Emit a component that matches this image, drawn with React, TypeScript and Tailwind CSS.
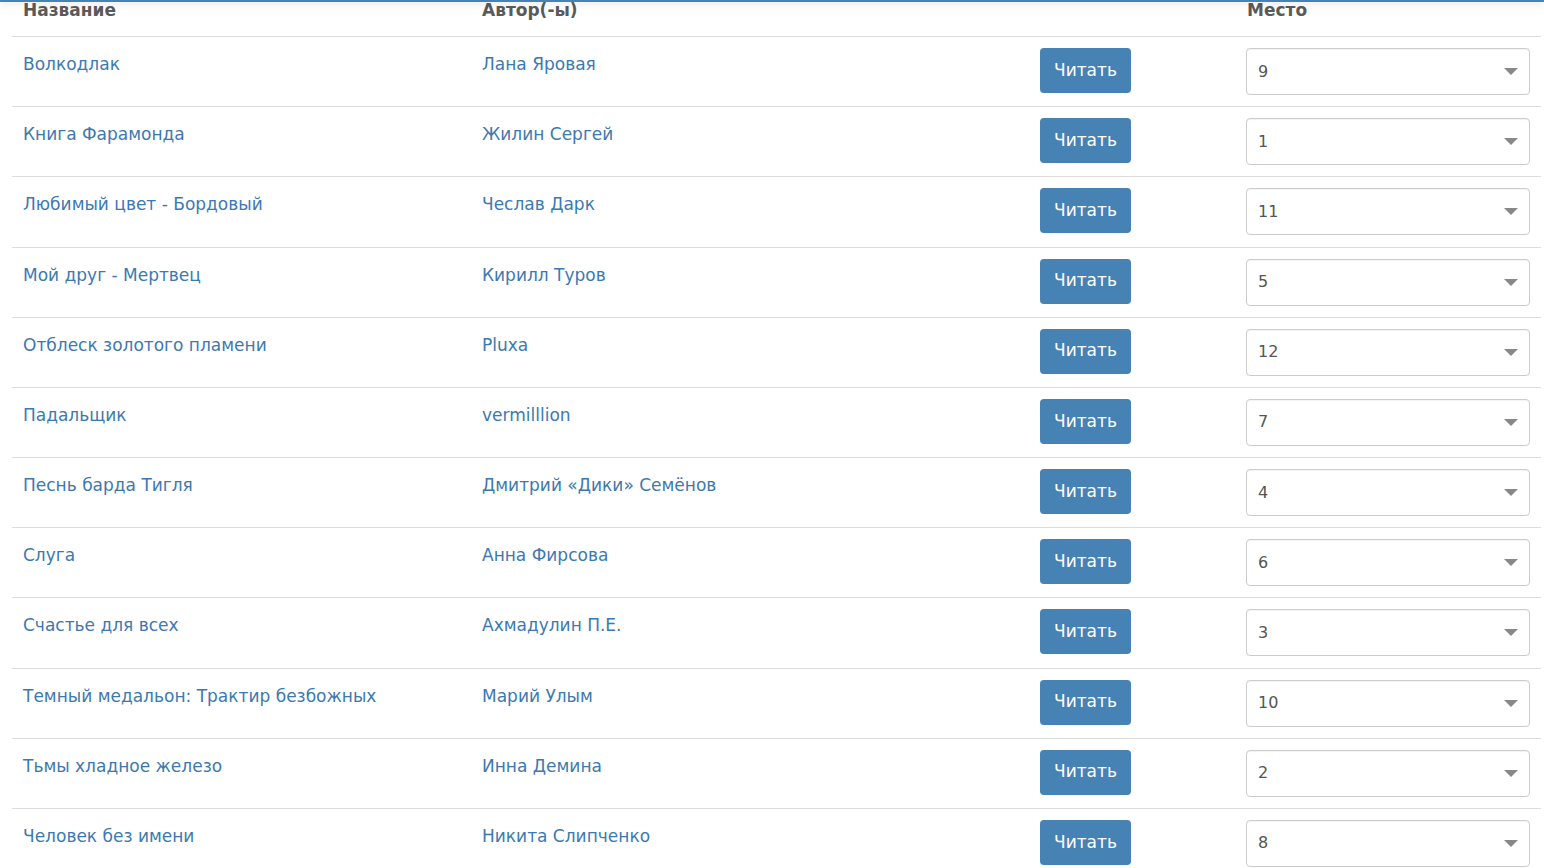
import React from "react";

interface Entry {
  title: string;
  author: string;
  place: number;
}

const entries: Entry[] = [
  { title: "Волкодлак", author: "Лана Яровая", place: 9 },
  { title: "Книга Фарамонда", author: "Жилин Сергей", place: 1 },
  { title: "Любимый цвет - Бордовый", author: "Чеслав Дарк", place: 11 },
  { title: "Мой друг - Мертвец", author: "Кирилл Туров", place: 5 },
  { title: "Отблеск золотого пламени", author: "Pluxa", place: 12 },
  { title: "Падальщик", author: "vermilllion", place: 7 },
  { title: "Песнь барда Тигля", author: "Дмитрий «Дики» Семёнов", place: 4 },
  { title: "Слуга", author: "Анна Фирсова", place: 6 },
  { title: "Счастье для всех", author: "Ахмадулин П.Е.", place: 3 },
  { title: "Темный медальон: Трактир безбожных", author: "Марий Улым", place: 10 },
  { title: "Тьмы хладное железо", author: "Инна Демина", place: 2 },
  { title: "Человек без имени", author: "Никита Слипченко", place: 8 },
];

const cols = "grid grid-cols-[459px_558px_206px_306px]";

const PlaceSelect: React.FC<{ value: number }> = ({ value }) => (
  <div className="h-[47px] w-[284px] rounded-[4px] border border-[#cccccc] bg-white flex items-center justify-between pl-[11px] pr-[11px] shadow-[inset_0_1px_1px_rgba(0,0,0,0.05)]">
    <span className="text-[16px] text-[#555555]">{value}</span>
    <svg width="14" height="7" viewBox="0 0 14 7">
      <polygon points="0,0 14,0 7,7" fill="#888888" />
    </svg>
  </div>
);

export default function App() {
  return (
    <div
      className="relative min-h-screen bg-white overflow-hidden"
      style={{ fontFamily: '"DejaVu Sans", Verdana, sans-serif' }}
    >
      {/* navbar edge */}
      <div className="absolute top-0 left-0 right-0 h-[2px] bg-[#4682b4] shadow-[0_2px_6px_rgba(0,0,0,0.18)] z-10" />

      <div className="pl-[12px] pr-[3px]">
        {/* header */}
        <div className={`${cols} h-[36px] items-end pb-[17px] text-[17px] font-bold text-[#5a5a5a] leading-none`}>
          <div className="pl-[11px]">Название</div>
          <div className="pl-[11px]">Автор(-ы)</div>
          <div />
          <div className="pl-[12px]">Место</div>
        </div>

        {entries.map((e) => (
          <div key={e.title} className={`${cols} h-[70.18px] border-t border-[#dddddd]`}>
            <div className="pl-[11px] pt-[15px] text-[17px] text-[#3c79b0]">{e.title}</div>
            <div className="pl-[11px] pt-[15px] text-[17px] text-[#3c79b0]">{e.author}</div>
            <div className="pl-[11px] pt-[11px]">
              <button className="h-[45px] w-[91px] rounded-[4px] bg-[#4682b4] text-white text-[17px]">
                Читать
              </button>
            </div>
            <div className="pl-[11px] pt-[11px]">
              <PlaceSelect value={e.place} />
            </div>
          </div>
        ))}
      </div>
    </div>
  );
}
